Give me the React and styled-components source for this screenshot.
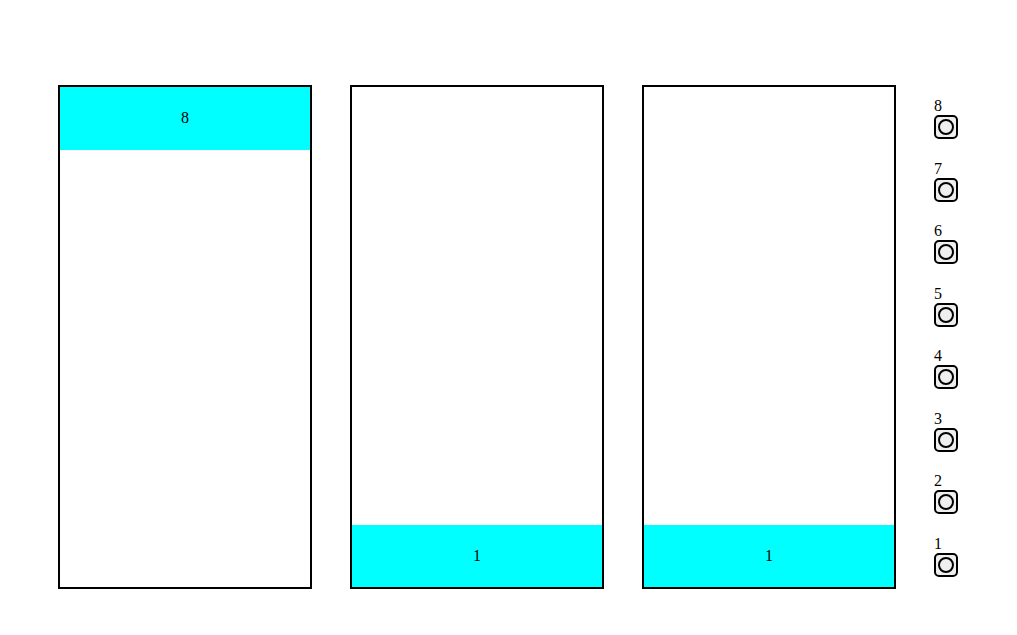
import styled, { createGlobalStyle } from 'styled-components'

const GlobalStyle = createGlobalStyle`
    body {
        margin: 0;
        font-family: "Liberation Serif", "Times New Roman", serif;
        font-size: 16px;
        background: #ffffff;
        color: #000000;
    }
`;

const Building = styled.div`
    display: flex;
    flex-direction: row;
    gap: 38px;
    padding: 85px 0 0 58px;
`;

const Shaft = styled.div`
    position: relative;
    width: 250px;
    height: 500px;
    border: 2px solid #000000;
`;

const Car = styled.div`
    position: absolute;
    left: 0;
    right: 0;
    height: 62.5px;
    background-color: #00ffff;
    display: flex;
    align-items: center;
    justify-content: center;
`;

const Panel = styled.div`
    display: flex;
    flex-direction: column;
    margin-top: 2px;
    height: 500px;
`;

const FloorRow = styled.div`
    height: 62.5px;
    display: flex;
    flex-direction: column;
    justify-content: center;
    align-items: flex-start;
`;

const FloorLabel = styled.span`
    line-height: 18px;
`;

const CallButton = styled.button`
    width: 24px;
    height: 24px;
    padding: 0;
    border: 2px solid #000000;
    border-radius: 5px;
    background-color: #efefef;
    display: flex;
    align-items: center;
    justify-content: center;
    cursor: pointer;
`;

const Dot = styled.span`
    width: 16px;
    height: 16px;
    box-sizing: border-box;
    border: 2px solid #000000;
    border-radius: 50%;
    background-color: #efefef;
`;

const floors = [8, 7, 6, 5, 4, 3, 2, 1]
const elevators = [8, 1, 1]

export default function App() {
    return (
        <>
            <GlobalStyle />
            <Building>
                {elevators.map((floor, i) => (
                    <Shaft key={i}>
                        <Car style={{ bottom: (floor - 1) * 62.5 }}>{floor}</Car>
                    </Shaft>
                ))}
                <Panel>
                    {floors.map(f => (
                        <FloorRow key={f}>
                            <FloorLabel>{f}</FloorLabel>
                            <CallButton><Dot /></CallButton>
                        </FloorRow>
                    ))}
                </Panel>
            </Building>
        </>
    )
}
